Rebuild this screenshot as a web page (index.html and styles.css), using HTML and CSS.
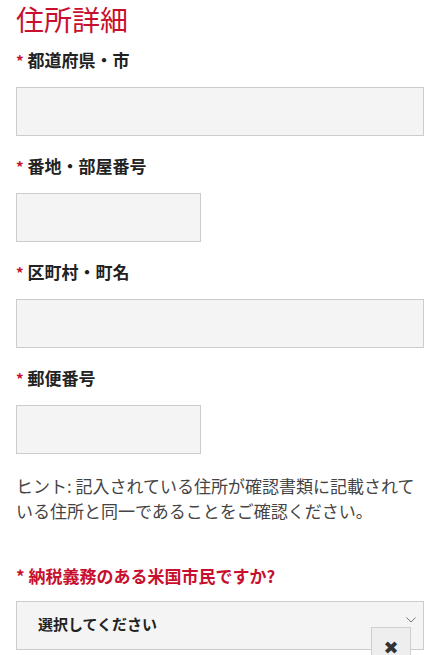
FILE: index.html
```html
<!DOCTYPE html>
<html lang="ja">
<head>
<meta charset="utf-8">
<link rel="stylesheet" href="styles.css">
</head>
<body>
<div class="page">
  <h1 class="title">住所詳細</h1>

  <div class="field">
    <label class="label"><span class="req">*</span> 都道府県・市</label>
    <div class="input wide"></div>
  </div>

  <div class="field">
    <label class="label"><span class="req">*</span> 番地・部屋番号</label>
    <div class="input narrow"></div>
  </div>

  <div class="field">
    <label class="label"><span class="req">*</span> 区町村・町名</label>
    <div class="input wide"></div>
  </div>

  <div class="field">
    <label class="label"><span class="req">*</span> 郵便番号</label>
    <div class="input narrow"></div>
  </div>

  <p class="hint">ヒント: 記入されている住所が確認書類に記載されている住所と同一であることをご確認ください。</p>

  <div class="field question">
    <label class="label red">* 納税義務のある米国市民ですか?</label>
    <div class="select">
      <span class="select-text">選択してください</span>
      <svg class="chev" width="10" height="6" viewBox="0 0 10 6"><path d="M0.5 0.5 L5 5 L9.5 0.5" fill="none" stroke="#777" stroke-width="1"/></svg>
    </div>
  </div>

  <div class="close">✖</div>
</div>
</body>
</html>
```

FILE: styles.css
```css
* { box-sizing: border-box; }
html, body { margin: 0; padding: 0; background: #fff; }
body {
  font-family: "Noto Sans CJK JP", "Noto Sans", sans-serif;
  color: #222;
  overflow: hidden;
}
.page {
  position: relative;
  padding: 1px 19px 0 16px;
  height: 655px;
}
.title {
  margin: 0;
  font-size: 28px;
  line-height: 36px;
  font-weight: 400;
  color: #c8102e;
}
.field {
  margin-top: 11px;
}
.field + .field { margin-top: 18px; }
.label {
  display: block;
  font-size: 17px;
  line-height: 24px;
  font-weight: 700;
  color: #222;
  margin-bottom: 14px;
}
.req {
  color: #c8102e;
  font-size: 15px;
}
.label.red { color: #c8102e; }
.input {
  height: 49px;
  background: #f4f4f4;
  border: 1px solid #cccccc;
}
.input.wide { width: 408px; }
.input.narrow { width: 185px; }
.hint {
  margin: 19px 0 0 0;
  font-size: 17px;
  line-height: 25px;
  color: #444;
  width: 410px;
}
.field.question { margin-top: 41px; }
.question .label { margin-bottom: 13px; }
.select {
  height: 49px;
  width: 408px;
  background: #f4f4f4;
  border: 1px solid #cccccc;
  display: flex;
  align-items: center;
  justify-content: space-between;
  padding: 0 7px 4px 21px;
}
.select-text {
  font-size: 15px;
  font-weight: 700;
  color: #222;
}
.chev { margin-top: -8px; }
.close {
  position: absolute;
  left: 371px;
  top: 627px;
  width: 40px;
  height: 40px;
  background: #eeeeee;
  border: 1px solid #cfcfcf;
  color: #333;
  font-family: "DejaVu Sans", sans-serif;
  font-size: 18px;
  text-align: center;
  padding-top: 10px;
  line-height: 20px;
}
```
